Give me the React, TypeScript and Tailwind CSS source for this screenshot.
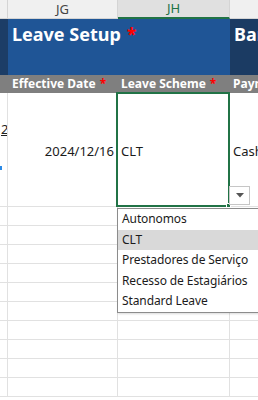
import { useState } from 'react';

const leaveSchemes = ['Autonomos', 'CLT', 'Prestadores de Serviço', 'Recesso de Estagiários', 'Standard Leave'];

function Star() {
  return <span className="text-[#ff0000] ml-1">*</span>;
}

export default function App() {
  const [selected, setSelected] = useState('CLT');

  return (
    <div className="relative w-[258px] h-[400px] overflow-hidden bg-white font-['Noto_Sans',sans-serif] text-[#1b1b1b]">
      {/* column letters */}
      <div className="flex h-[19px] text-[13px] leading-[18px]">
        <div className="w-[8px] shrink-0 bg-[#f0f0f0] border-r border-b border-[#d4d4d4]" />
        <div className="w-[110px] shrink-0 bg-[#f0f0f0] border-r border-b border-[#d4d4d4] text-center text-[#444]">JG</div>
        <div className="w-[112px] shrink-0 bg-[#e0e0e0] border-r border-[#d4d4d4] border-b-2 border-b-[#217346] text-center text-[#217346] leading-[17px]">JH</div>
        <div className="flex-1 bg-[#f0f0f0] border-b border-[#d4d4d4]" />
      </div>

      {/* section title row */}
      <div className="flex h-[56px] text-white font-bold">
        <div className="w-[8px] shrink-0 bg-[#1c3d66]" />
        <div className="w-[222px] shrink-0 bg-[#1f5596] pl-[4px] pt-[3px] text-[18px] leading-[24px]">
          Leave Setup<span className="text-[#ff0000] ml-[6px]">*</span>
        </div>
        <div className="flex-1 bg-[#1b3b63] pl-[4px] pt-[3px] text-[18px] leading-[24px] whitespace-nowrap overflow-hidden">Bank</div>
      </div>

      {/* field headers */}
      <div className="flex h-[18px] bg-[#7f7f7f] text-white font-bold text-[12px] leading-[18px] whitespace-nowrap">
        <div className="w-[8px] shrink-0" />
        <div className="w-[110px] shrink-0 pl-[4px] overflow-hidden">
          Effective Date<Star />
        </div>
        <div className="w-[112px] shrink-0 pl-[3px] overflow-hidden">
          Leave Scheme<Star />
        </div>
        <div className="flex-1 pl-[3px] overflow-hidden">Payment</div>
      </div>

      {/* data row */}
      <div className="flex h-[114px] text-[13px] border-b border-[#e1e1e1]">
        <div className="relative w-[8px] shrink-0 border-r border-[#e1e1e1] overflow-hidden">
          <span className="absolute left-[1px] top-[27px] underline text-[#222]">2</span>
          <span className="absolute left-0 top-[73px] w-[2px] h-[4px] bg-[#2b8ae6]" />
        </div>
        <div className="w-[110px] shrink-0 border-r border-[#e1e1e1] flex items-center justify-end pr-[3px] pt-[4px]">
          2024/12/16
        </div>
        <div className="w-[112px] shrink-0 border-r border-[#e1e1e1] flex items-center pl-[3px] pt-[4px]">{selected}</div>
        <div className="flex-1 flex items-center pl-[3px] pt-[4px] whitespace-nowrap overflow-hidden">Cash</div>
      </div>

      {/* empty rows */}
      {Array.from({ length: 10 }).map((_, i) => (
        <div key={i} className="flex h-[19px] border-b border-[#e1e1e1]">
          <div className="w-[8px] shrink-0 border-r border-[#e1e1e1]" />
          <div className="w-[110px] shrink-0 border-r border-[#e1e1e1]" />
          <div className="w-[112px] shrink-0 border-r border-[#e1e1e1]" />
          <div className="flex-1" />
        </div>
      ))}

      {/* active cell selection */}
      <div className="absolute left-[116px] top-[92px] w-[114px] h-[115px] border-2 border-[#217346] pointer-events-none" />
      <div className="absolute left-[226px] top-[203px] w-[5px] h-[5px] bg-[#217346] border border-white" />

      {/* dropdown button */}
      <div className="absolute left-[229px] top-[186px] w-[21px] h-[19px] bg-white border border-[#c6c6c6] flex items-center justify-center">
        <svg width="8" height="5" viewBox="0 0 8 5">
          <path d="M0 0h8L4 4.5z" fill="#555" />
        </svg>
      </div>

      {/* dropdown list */}
      <div className="absolute left-[117px] top-[208px] w-[160px] h-[105px] bg-white border border-[#8c8c8c] shadow-[1px_1px_2px_rgba(0,0,0,0.15)] text-[12px] tracking-[-0.1px]">
        {leaveSchemes.map((s) => (
          <div
            key={s}
            onClick={() => setSelected(s)}
            className={`h-[20.6px] leading-[20.6px] pl-[4px] whitespace-nowrap ${s === selected ? 'bg-[#d9d9d9]' : ''}`}
          >
            {s}
          </div>
        ))}
      </div>
    </div>
  );
}
